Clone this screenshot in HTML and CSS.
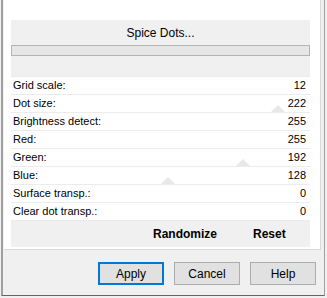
FILE: index.html
```html
<!DOCTYPE html>
<html>
<head>
  <meta charset="utf-8">
  <title>Spice Dots</title>
  <link rel="stylesheet" href="styles.css">
</head>
<body>
  <div class="frame">
    <div class="panel">
      <div class="box">
        <div class="head">
          <div class="title">Spice Dots...</div>
          <div class="strip"></div>
        </div>
        <div class="rows">
          <div class="row"><span>Grid scale:</span><span>12</span></div>
          <div class="row"><span>Dot size:</span><span>222</span><i class="thumb" style="left:260px"></i></div>
          <div class="row"><span>Brightness detect:</span><span>255</span></div>
          <div class="row"><span>Red:</span><span>255</span></div>
          <div class="row"><span>Green:</span><span>192</span><i class="thumb" style="left:225px"></i></div>
          <div class="row"><span>Blue:</span><span>128</span><i class="thumb" style="left:150px"></i></div>
          <div class="row"><span>Surface transp.:</span><span>0</span></div>
          <div class="row"><span>Clear dot transp.:</span><span>0</span></div>
        </div>
        <div class="foot">
          <span class="randomize">Randomize</span>
          <span class="reset">Reset</span>
        </div>
      </div>
    </div>
    <div class="buttons">
      <button class="btn default">Apply</button>
      <button class="btn">Cancel</button>
      <button class="btn">Help</button>
    </div>
  </div>
</body>
</html>
```

FILE: styles.css
```css
html, body { margin:0; padding:0; }
body { width:327px; height:298px; background:#f0f0f0; overflow:hidden;
       font-family:"Liberation Sans", Arial, sans-serif; font-size:11px; color:#000; }

.frame { height:296px; border-bottom:1px solid #646464; box-sizing:border-box;
         margin-left:1px; border-left:2px solid #a0a0a0; padding-left:1px;
         width:324px; border-right:1px solid #a0a0a0; padding-right:2px; }

.panel { background:#fff; height:250px; width:317px; box-sizing:border-box;
         border-right:1px solid #d9d9d9; border-bottom:1px solid #d9d9d9;
         padding:20px 0 0 7px; }

.box { width:299px; }

.head { background:#f0f0f0; height:56px; }
.title { height:25px; line-height:26px; text-align:center; font-size:12px; }
.strip { height:9px; background:#e6e6e6; border:1px solid #b4b4b4; }

.rows { border-top:1px solid #ececec; }
.row { position:relative; height:17px; border-bottom:1px solid #ececec;
       display:flex; justify-content:space-between; align-items:center;
       padding:0 4px 0 2px; line-height:17px; overflow:hidden; }
.row span { position:relative; z-index:1; }
.thumb { position:absolute; bottom:0; width:0; height:0;
         border-left:7px solid transparent; border-right:7px solid transparent;
         border-bottom:7px solid #e8e8e8; }

.foot { background:#f0f0f0; height:26px; display:flex; align-items:center;
        font-weight:bold; font-size:12px; }
.randomize { margin-left:142px; }
.reset { margin-left:36px; }

.buttons { display:flex; justify-content:flex-end; gap:10px; padding:12px 6px 0 0; }
.btn { width:66px; height:23px; background:#e1e1e1; border:1px solid #adadad;
       font-family:inherit; font-size:12px; color:#000; padding:0; margin:0; }
.btn.default { border:2px solid #0078d7; }
```
